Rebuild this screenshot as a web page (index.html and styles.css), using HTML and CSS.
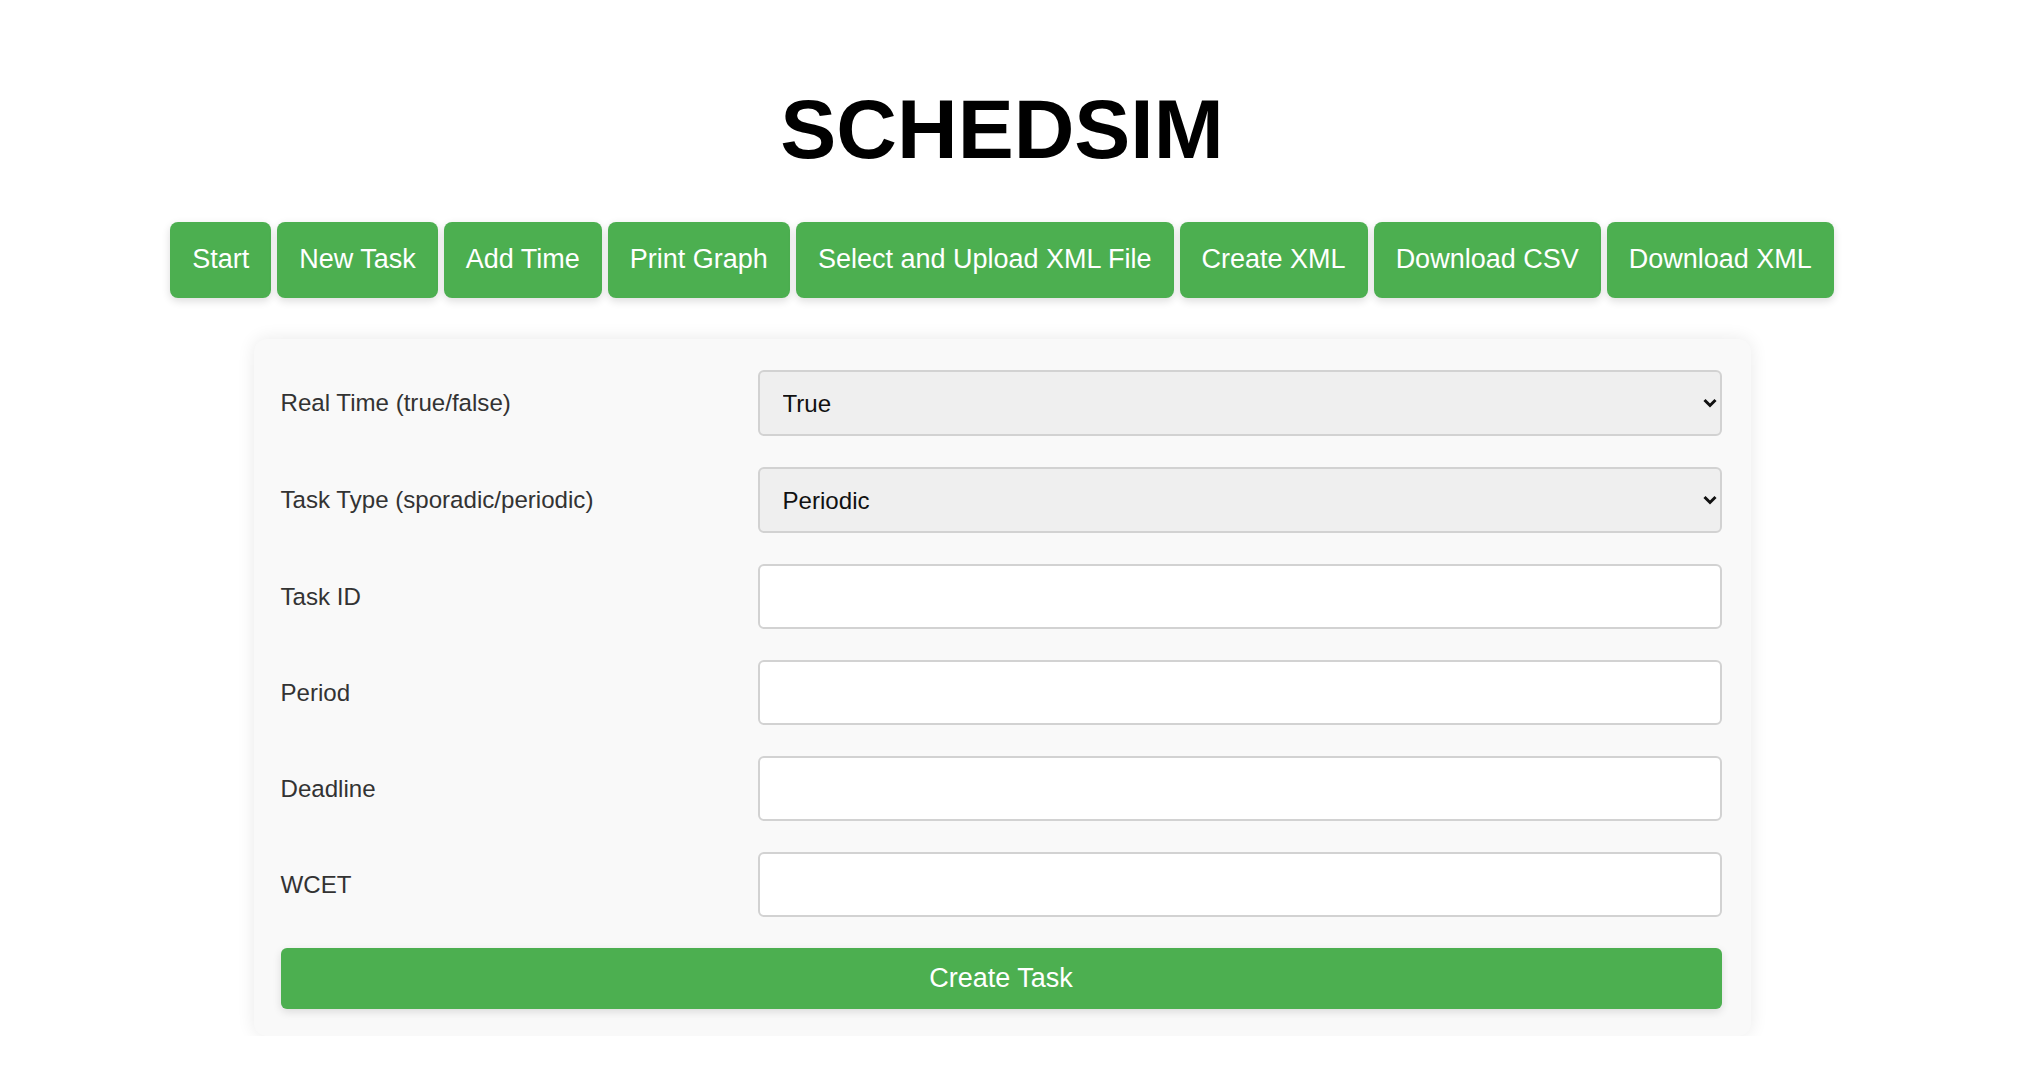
FILE: index.html
```html
<!DOCTYPE html>
<html lang="en">
<head>
<meta charset="utf-8">
<title>SCHEDSIM</title>
<link rel="stylesheet" href="styles.css">
</head>
<body>
<div class="page">
  <h1 class="title">SCHEDSIM</h1>
  <div class="toolbar">
    <button class="btn">Start</button>
    <button class="btn">New Task</button>
    <button class="btn">Add Time</button>
    <button class="btn">Print Graph</button>
    <button class="btn">Select and Upload XML File</button>
    <button class="btn">Create XML</button>
    <button class="btn">Download CSV</button>
    <button class="btn">Download XML</button>
  </div>
  <form class="card">
    <div class="row">
      <label class="label">Real Time (true/false)</label>
      <div class="select-wrap">
        <select class="field select"><option>True</option><option>False</option></select>
        <svg class="chev" width="14" height="10" viewBox="0 0 14 10"><path d="M1.5 2 L7 7.5 L12.5 2" fill="none" stroke="#111" stroke-width="3"/></svg>
      </div>
    </div>
    <div class="row">
      <label class="label">Task Type (sporadic/periodic)</label>
      <div class="select-wrap">
        <select class="field select"><option>Periodic</option><option>Sporadic</option></select>
        <svg class="chev" width="14" height="10" viewBox="0 0 14 10"><path d="M1.5 2 L7 7.5 L12.5 2" fill="none" stroke="#111" stroke-width="3"/></svg>
      </div>
    </div>
    <div class="row">
      <label class="label">Task ID</label>
      <input class="field input" type="text">
    </div>
    <div class="row">
      <label class="label">Period</label>
      <input class="field input" type="text">
    </div>
    <div class="row">
      <label class="label">Deadline</label>
      <input class="field input" type="text">
    </div>
    <div class="row">
      <label class="label">WCET</label>
      <input class="field input" type="text">
    </div>
    <button type="button" class="create">Create Task</button>
  </form>
</div>
</body>
</html>
```

FILE: styles.css
```css
html, body {
  margin: 0;
  padding: 0;
  background: #ffffff;
}
body {
  font-family: "Liberation Sans", Arial, sans-serif;
}
.page {
  padding-right: 23px;
  display: flex;
  flex-direction: column;
  align-items: center;
}
.title {
  margin: 82.5px 0 0 0;
  font-size: 84px;
  font-weight: bold;
  line-height: 92px;
  color: #000;
  text-align: center;
}
.toolbar {
  margin-top: 47.5px;
  display: flex;
  justify-content: center;
  gap: 6px;
}
.btn {
  font-family: "Liberation Sans", Arial, sans-serif;
  font-size: 27px;
  height: 76px;
  padding: 0 22px 1px 22px;
  color: #fff;
  background: #4caf50;
  border: none;
  border-radius: 8px;
  box-shadow: 0 3px 8px rgba(0, 0, 0, 0.14);
  white-space: nowrap;
}
.card {
  margin-top: 41px;
  width: 1497px;
  box-sizing: border-box;
  padding: 31px 29px 27px 27px;
  background: #f9f9f9;
  border-radius: 13px;
  box-shadow: 0 0 18px rgba(0, 0, 0, 0.09);
  display: flex;
  flex-direction: column;
  gap: 31px;
}
.row {
  display: grid;
  grid-template-columns: 477px 1fr;
  align-items: center;
}
.label {
  font-size: 24.1px;
  color: #333;
}
.select-wrap {
  position: relative;
}
.field {
  display: block;
  width: 100%;
  box-sizing: border-box;
  border: 2px solid #d2d2d2;
  border-radius: 6px;
  font-family: "Liberation Sans", Arial, sans-serif;
  font-size: 24.1px;
  color: #111;
  margin: 0;
}
.select {
  appearance: none;
  -webkit-appearance: none;
  height: 66px;
  padding: 0 40px 0 23px;
  background: #efefef;
}
.input {
  height: 65px;
  padding: 0 23px;
  background: #ffffff;
}
.chev {
  position: absolute;
  right: 5px;
  top: 50%;
  margin-top: -5px;
  pointer-events: none;
}
.create {
  height: 61px;
  width: 100%;
  border: none;
  border-radius: 6px;
  background: #4caf50;
  color: #fff;
  font-family: "Liberation Sans", Arial, sans-serif;
  font-size: 27px;
  box-shadow: 0 3px 8px rgba(0, 0, 0, 0.12);
}
```
